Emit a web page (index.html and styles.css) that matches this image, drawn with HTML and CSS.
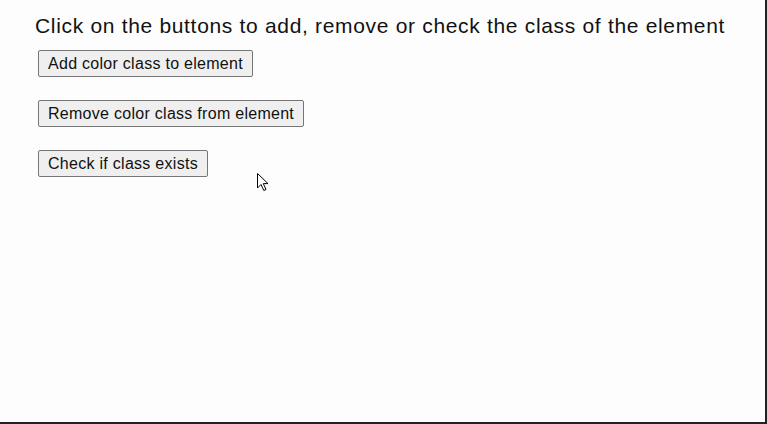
FILE: index.html
```html
<!DOCTYPE html>
<html>
<head>
<meta charset="utf-8">
<link rel="stylesheet" href="styles.css">
</head>
<body>
<div class="frame">
  <p class="title">Click on the buttons to add, remove or check the class of the element</p>
  <div class="actions">
    <button class="btn">Add color class to element</button>
    <button class="btn">Remove color class from element</button>
    <button class="btn">Check if class exists</button>
  </div>
  <svg class="cursor" width="14" height="20" viewBox="0 0 14 20">
    <path d="M1.5 1.5 L1.5 16 L5 12.5 L7.8 18.5 L10 17.5 L7.3 11.6 L12 11.6 Z" fill="#fff" stroke="#000" stroke-width="1" stroke-linejoin="miter"/>
  </svg>
</div>
</body>
</html>
```
FILE: styles.css
```css
html, body {
  margin: 0;
  padding: 0;
  background: #fdfdfd;
}
.frame {
  position: relative;
  box-sizing: border-box;
  width: 767px;
  height: 424px;
  border-right: 2px solid #222;
  border-bottom: 2px solid #222;
  padding: 13px 0 0 35px;
  font-family: "Liberation Sans", Arial, sans-serif;
}
.title {
  margin: 0;
  font-size: 21px;
  line-height: 26px;
  letter-spacing: 0.68px;
  color: #111;
  white-space: nowrap;
}
.actions {
  display: flex;
  flex-direction: column;
  align-items: flex-start;
  gap: 23px;
  margin-top: 11px;
  padding-left: 3px;
}
.btn {
  font-family: "Liberation Sans", Arial, sans-serif;
  font-size: 16px;
  line-height: 19px;
  letter-spacing: 0.28px;
  color: #111;
  background: #efefef;
  border: 1px solid #767676;
  border-radius: 2px;
  padding: 3px 9px 3px 9px;
}
.cursor {
  position: absolute;
  left: 256px;
  top: 172px;
}
```
